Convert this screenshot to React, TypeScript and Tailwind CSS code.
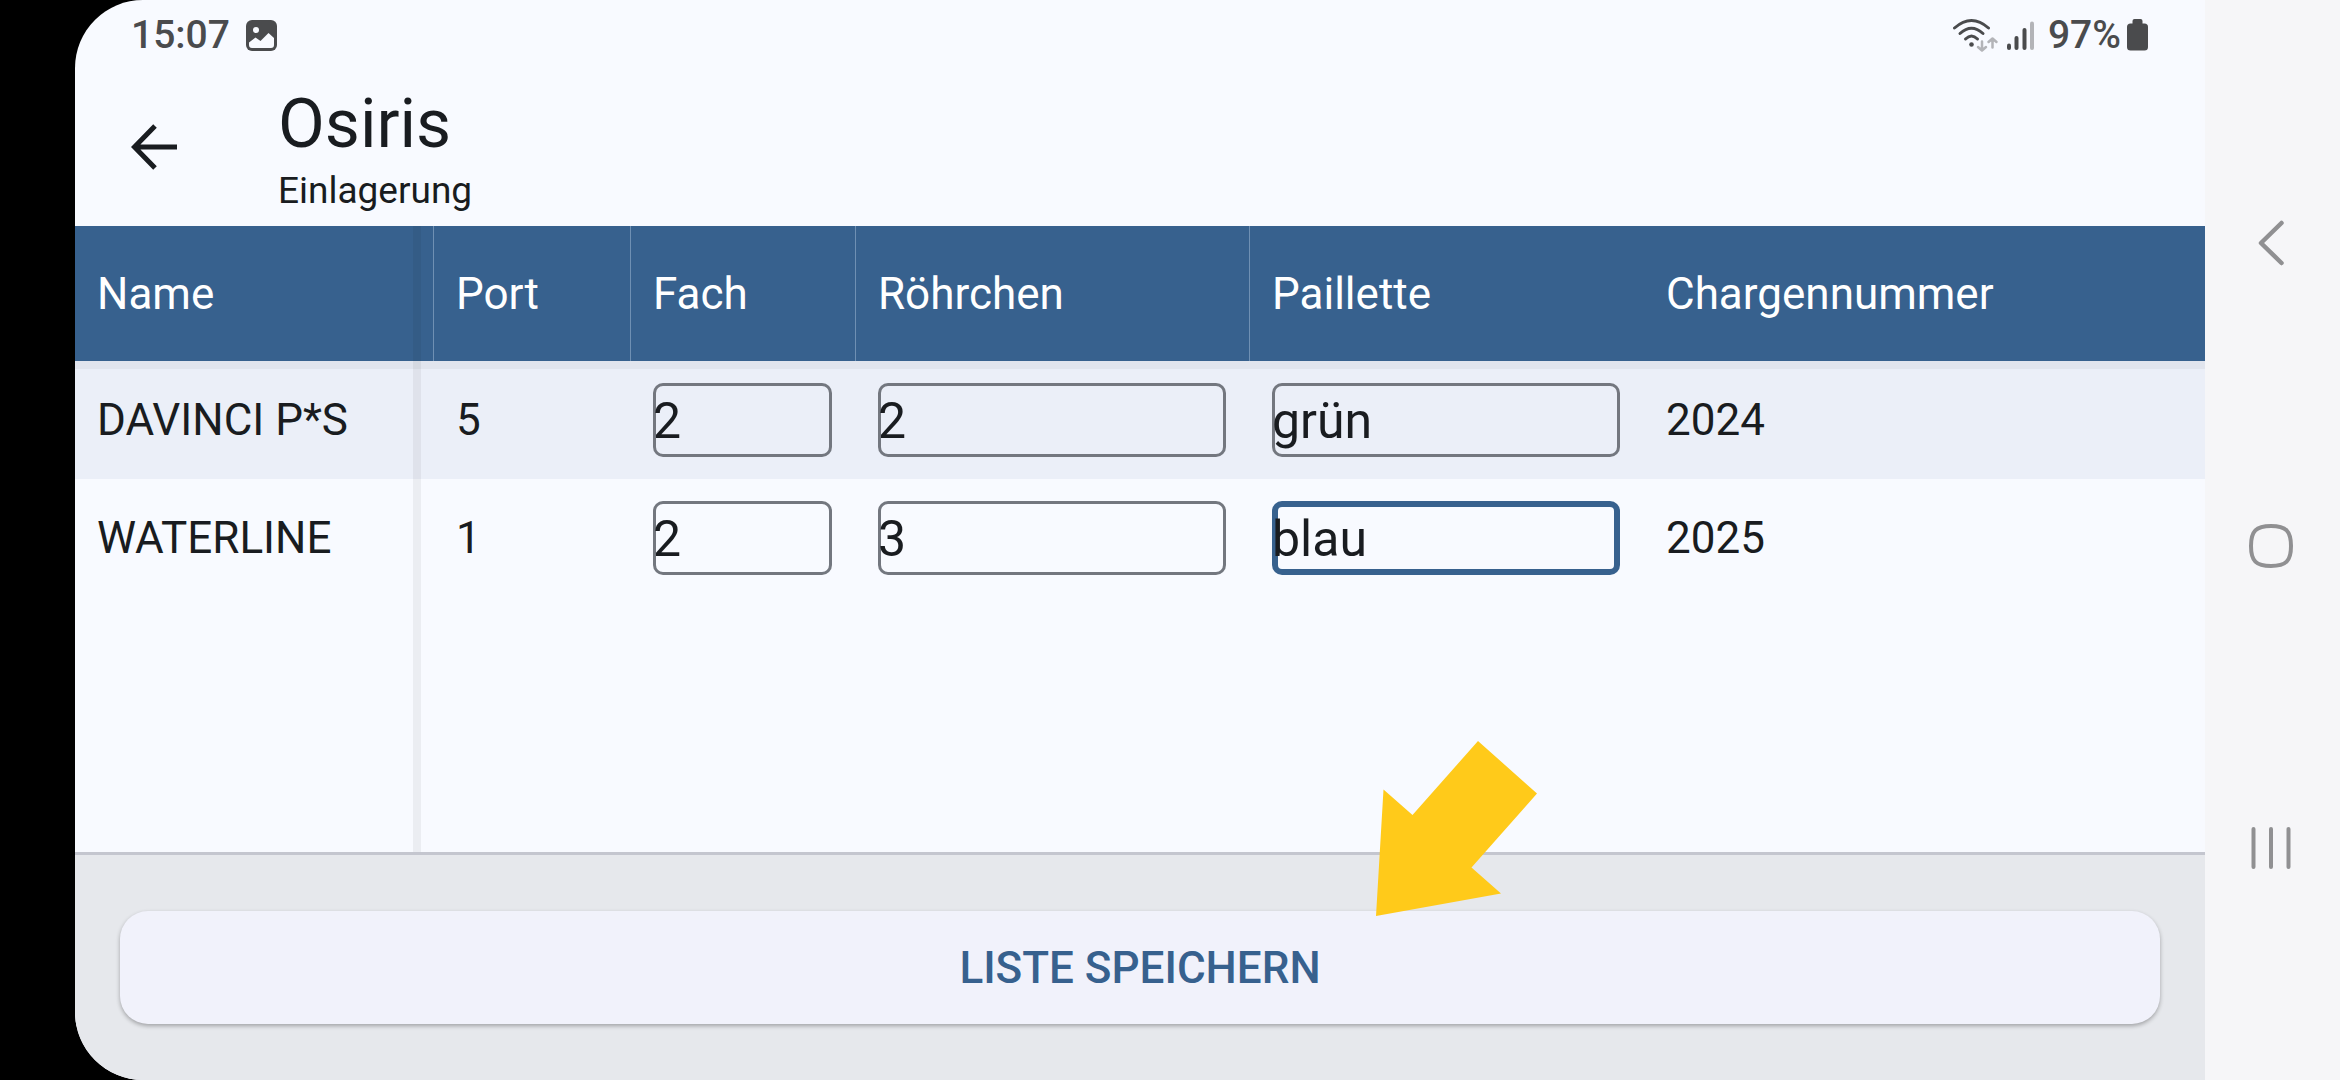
import { useState } from 'react'

const initialRows = [
  { name: 'DAVINCI P*S', port: '5', fach: '2', roehrchen: '2', paillette: 'grün', charge: '2024' },
  { name: 'WATERLINE', port: '1', fach: '2', roehrchen: '3', paillette: 'blau', charge: '2025' },
]

const headCell = 'h-[135px] px-[22px] text-left font-normal'
const divider = 'border-r border-[#6f90b3]'
const fieldCell = 'pl-[22px] pr-6'

function StatusBar() {
  return (
    <div className="flex h-[70px] items-center justify-between pl-14 pr-[57px] text-[39px] font-medium leading-none text-[#4a4b4d]">
      <div className="flex items-center gap-4">
        <span>15:07</span>
        <svg width="31" height="31" viewBox="0 0 31 31" aria-hidden="true">
          <rect width="31" height="31" rx="6" fill="#4a4b4d" />
          <circle cx="10" cy="10" r="3" fill="#f8faff" />
          <path d="M3 22.5 L9.5 17.5 L14.5 21 L22.5 13 L28 18 V25 Q28 28 25 28 H6 Q3 28 3 25 Z" fill="#f8faff" />
        </svg>
      </div>
      <div className="flex items-center">
        <svg width="84" height="36" viewBox="0 0 84 36" fill="none" strokeLinecap="round" aria-hidden="true">
          <g stroke="#4a4b4d" strokeWidth="3">
            <path d="M2.5 11 Q19.5 -4 36.5 11" />
            <path d="M8 16.5 Q19.5 6 31 16.5" />
            <path d="M13.5 22 Q19.5 16 25.5 22" />
          </g>
          <circle cx="19.5" cy="27.5" r="2.3" fill="#4a4b4d" />
          <g stroke="#b3b4b8" strokeWidth="2.5" strokeLinejoin="round">
            <path d="M30 24.5 V33 M26 30 L30 33.5 L34 30" />
            <path d="M40.5 30.5 V22 M36.5 25 L40.5 21.5 L44.5 25" />
          </g>
          <g strokeWidth="4" stroke="#4a4b4d">
            <path d="M57 28.5 V31" />
            <path d="M64.5 21 V31" />
            <path d="M72.5 13 V31" />
            <path d="M80 6.5 V31" stroke="#b3b4b8" />
          </g>
        </svg>
        <span className="ml-3">97%</span>
        <svg className="ml-1.5" width="21" height="32" viewBox="0 0 21 32" fill="#4a4b4d" aria-hidden="true">
          <rect x="5.5" width="10" height="8" rx="2" />
          <rect y="4.5" width="21" height="27" rx="3.5" />
        </svg>
      </div>
    </div>
  )
}

function NavBar() {
  return (
    <nav className="flex w-[135px] shrink-0 flex-col items-center justify-between bg-[#f6f6f8] pb-[208px] pr-1 pt-[219px]">
      <button aria-label="Zurück">
        <svg width="48" height="48" viewBox="0 0 48 48" fill="none" stroke="#909092" strokeWidth="4.5" strokeLinecap="round" strokeLinejoin="round">
          <path d="M34.5 4 L14 24 L34.5 44" />
        </svg>
      </button>
      <button aria-label="Startseite">
        <svg width="48" height="48" viewBox="0 0 48 48" fill="none" stroke="#909092" strokeWidth="4">
          <path d="M24 4 C39 4 44 9 44 24 C44 39 39 44 24 44 C9 44 4 39 4 24 C4 9 9 4 24 4 Z" />
        </svg>
      </button>
      <button aria-label="Letzte Apps">
        <svg width="48" height="48" viewBox="0 0 48 48" fill="none" stroke="#909092" strokeWidth="4" strokeLinecap="round">
          <path d="M6.5 5 V43 M24 5 V43 M41.5 5 V43" />
        </svg>
      </button>
    </nav>
  )
}

type FieldProps = {
  label: string
  value: string
  active?: boolean
  onChange: (value: string) => void
}

function Field({ label, value, active, onChange }: FieldProps) {
  return (
    <input
      aria-label={label}
      value={value}
      onChange={(e) => onChange(e.target.value)}
      className={`block h-[74px] w-full rounded-[10px] bg-transparent p-0 pt-0.5 text-[50px] leading-none outline-none ring-inset ${
        active ? 'ring-[6px] ring-[#37618e]' : 'ring-[3px] ring-[#73777f]'
      }`}
    />
  )
}

export default function App() {
  const [rows, setRows] = useState(initialRows)

  function update(index: number, key: string, value: string) {
    setRows(rows.map((row, i) => (i === index ? { ...row, [key]: value } : row)))
  }

  return (
    <div className="flex min-h-screen bg-black pl-[75px] font-[Roboto,sans-serif] text-[#191c20]">
      <div className="flex min-w-0 flex-1 flex-col overflow-hidden rounded-l-[68px] bg-[#f8faff]">
        <StatusBar />

        <header className="flex h-[156px] items-center pl-12">
          <button aria-label="Zurück" className="p-2">
            <svg width="48" height="48" viewBox="0 0 48 48" fill="none" stroke="#191c20" strokeWidth="5">
              <path d="M46 23 H5 M24 2 L3.5 23 L24 44" />
            </svg>
          </button>
          <div className="ml-[91px] pt-1">
            <h1 className="text-[68px] leading-[82px]">Osiris</h1>
            <p className="text-[37px] leading-[52px]">Einlagerung</p>
          </div>
        </header>

        <main className="relative flex-1">
          <table className="w-full table-fixed border-separate border-spacing-0 text-[44px] leading-none">
            <colgroup>
              <col className="w-[359px]" />
              <col className="w-[197px]" />
              <col className="w-[225px]" />
              <col className="w-[394px]" />
              <col className="w-[394px]" />
              <col />
            </colgroup>
            <thead className="bg-[#37618e] text-white">
              <tr>
                <th className={`${headCell} ${divider}`}>Name</th>
                <th className={`${headCell} ${divider}`}>Port</th>
                <th className={`${headCell} ${divider}`}>Fach</th>
                <th className={`${headCell} ${divider}`}>Röhrchen</th>
                <th className={headCell}>Paillette</th>
                <th className={headCell}>Chargennummer</th>
              </tr>
            </thead>
            <tbody>
              {rows.map((row, i) => (
                <tr key={row.name} className="odd:bg-[#ebeff8]">
                  <td className="h-[118px] px-[22px]">{row.name}</td>
                  <td className="px-[22px]">{row.port}</td>
                  <td className={fieldCell}>
                    <Field label="Fach" value={row.fach} onChange={(v) => update(i, 'fach', v)} />
                  </td>
                  <td className={fieldCell}>
                    <Field label="Röhrchen" value={row.roehrchen} onChange={(v) => update(i, 'roehrchen', v)} />
                  </td>
                  <td className={fieldCell}>
                    <Field
                      label="Paillette"
                      value={row.paillette}
                      active={i === 1}
                      onChange={(v) => update(i, 'paillette', v)}
                    />
                  </td>
                  <td className="px-[22px]">{row.charge}</td>
                </tr>
              ))}
            </tbody>
          </table>

          <div className="pointer-events-none absolute inset-x-0 top-[135px] h-2 bg-black/4" />
          <div className="pointer-events-none absolute inset-y-0 left-[338px] w-2 bg-black/5" />
        </main>

        <footer className="relative border-t-[3px] border-[#c4c6cf] bg-[#e6e8ec] px-[45px] py-14">
          <button className="block h-[113px] w-full rounded-[28px] bg-[#f1f2fb] text-[44px] font-medium text-[#37618e] shadow-[0_2px_4px_rgba(0,0,0,0.3)]">
            LISTE SPEICHERN
          </button>
          <svg
            className="pointer-events-none absolute bottom-[162px] left-[61%]"
            width="164"
            height="178"
            viewBox="0 0 164 178"
            fill="#ffca1a"
            aria-hidden="true"
          >
            <path d="M104 1 L163 53.5 L97.5 127.5 L127 153.5 L2 176 L9.5 49.5 L38.5 75 Z" />
          </svg>
        </footer>
      </div>

      <NavBar />
    </div>
  )
}
